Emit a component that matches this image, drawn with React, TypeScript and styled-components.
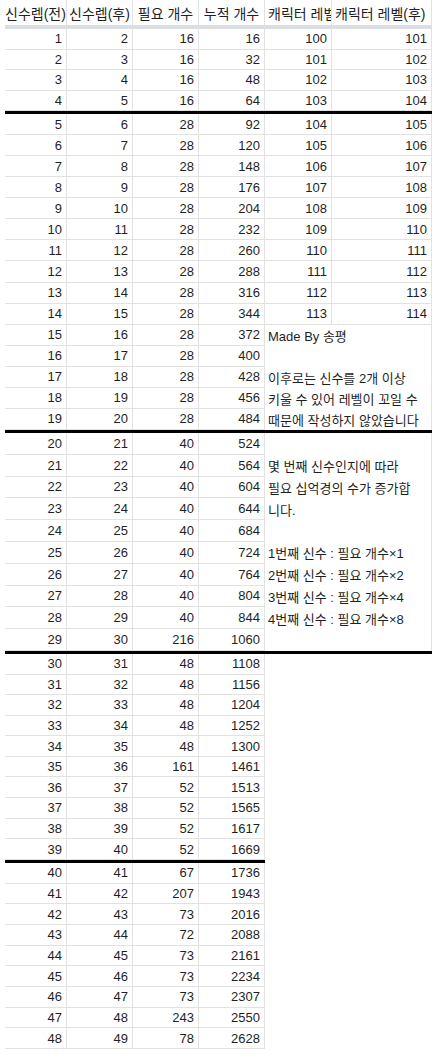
import * as React from 'react'
import styled, { createGlobalStyle } from 'styled-components'

const GlobalStyle = createGlobalStyle`
  html, body {
    margin: 0;
    padding: 0;
    background: #ffffff;
  }
  body {
    font-family: 'Liberation Sans', 'Noto Sans CJK KR', sans-serif;
    color: #1f1f1f;
  }
`

const COLS = '62px 66px 66px 66px 67px 100px'
const GRID = '#e2e2e2'

type Row = number[]
type Group = { height: number; rows: Row[]; notes?: string[]; shortLine?: boolean }

const groups: Group[] = [
  {
    height: 20.5,
    rows: [
      [1, 2, 16, 16, 100, 101],
      [2, 3, 16, 32, 101, 102],
      [3, 4, 16, 48, 102, 103],
      [4, 5, 16, 64, 103, 104],
    ],
  },
  {
    height: 21.07,
    rows: [
      [5, 6, 28, 92, 104, 105],
      [6, 7, 28, 120, 105, 106],
      [7, 8, 28, 148, 106, 107],
      [8, 9, 28, 176, 107, 108],
      [9, 10, 28, 204, 108, 109],
      [10, 11, 28, 232, 109, 110],
      [11, 12, 28, 260, 110, 111],
      [12, 13, 28, 288, 111, 112],
      [13, 14, 28, 316, 112, 113],
      [14, 15, 28, 344, 113, 114],
      [15, 16, 28, 372],
      [16, 17, 28, 400],
      [17, 18, 28, 428],
      [18, 19, 28, 456],
      [19, 20, 28, 484],
    ],
    notes: ['Made By 송평', '', '이후로는 신수를 2개 이상', '키울 수 있어 레벨이 꼬일 수', '때문에 작성하지 않았습니다'],
  },
  {
    height: 21.8,
    rows: [
      [20, 21, 40, 524],
      [21, 22, 40, 564],
      [22, 23, 40, 604],
      [23, 24, 40, 644],
      [24, 25, 40, 684],
      [25, 26, 40, 724],
      [26, 27, 40, 764],
      [27, 28, 40, 804],
      [28, 29, 40, 844],
      [29, 30, 216, 1060],
    ],
    notes: [
      '',
      '몇 번째 신수인지에 따라',
      '필요 십억경의 수가 증가합',
      '니다.',
      '',
      '1번째 신수 : 필요 개수×1',
      '2번째 신수 : 필요 개수×2',
      '3번째 신수 : 필요 개수×4',
      '4번째 신수 : 필요 개수×8',
      '',
    ],
  },
  {
    height: 20.6,
    rows: [
      [30, 31, 48, 1108],
      [31, 32, 48, 1156],
      [32, 33, 48, 1204],
      [33, 34, 48, 1252],
      [34, 35, 48, 1300],
      [35, 36, 161, 1461],
      [36, 37, 52, 1513],
      [37, 38, 52, 1565],
      [38, 39, 52, 1617],
      [39, 40, 52, 1669],
    ],
    shortLine: true,
  },
  {
    height: 20.7,
    rows: [
      [40, 41, 67, 1736],
      [41, 42, 207, 1943],
      [42, 43, 73, 2016],
      [43, 44, 72, 2088],
      [44, 45, 73, 2161],
      [45, 46, 73, 2234],
      [46, 47, 73, 2307],
      [47, 48, 243, 2550],
      [48, 49, 78, 2628],
    ],
  },
]

const Sheet = styled.div`
  width: 427px;
  margin-left: 5px;
  font-size: 13px;
`

const HeaderRow = styled.div`
  display: grid;
  grid-template-columns: ${COLS};
  height: 25px;
  border-bottom: 4px solid #dadde1;
`

const HeaderCell = styled.div<{ $clip?: boolean }>`
  display: flex;
  align-items: center;
  justify-content: ${(p) => (p.$clip ? 'flex-start' : 'center')};
  padding-left: ${(p) => (p.$clip ? '3px' : '0')};
  border-right: 1px solid ${GRID};
  font-size: 14px;
  white-space: nowrap;
  overflow: ${(p) => (p.$clip ? 'hidden' : 'visible')};
  min-width: 0;
`

const Body = styled.div<{ $h: number }>`
  display: grid;
  grid-template-columns: ${COLS};
  grid-auto-rows: ${(p) => p.$h}px;
`

const Cell = styled.div`
  display: flex;
  align-items: center;
  justify-content: flex-end;
  padding-right: 4px;
  border-right: 1px solid ${GRID};
  border-bottom: 1px solid ${GRID};
  white-space: nowrap;
`

const Note = styled.div`
  grid-column: span 2;
  display: flex;
  align-items: center;
  padding-left: 3px;
  border-right: 1px solid ${GRID};
  white-space: nowrap;
`

const Blank = styled.div`
  grid-column: span 2;
`

const Divider = styled.div<{ $short?: boolean }>`
  height: 3px;
  background: #000;
  width: ${(p) => (p.$short ? '260px' : '100%')};
`

const headers = ['신수렙(전)', '신수렙(후)', '필요 개수', '누적 개수']

export default function App() {
  return (
    <Sheet>
      <GlobalStyle />
      <HeaderRow>
        {headers.map((h) => (
          <HeaderCell key={h}>{h}</HeaderCell>
        ))}
        <HeaderCell $clip>캐릭터 레벨</HeaderCell>
        <HeaderCell $clip>캐릭터 레벨(후)</HeaderCell>
      </HeaderRow>
      {groups.map((g, gi) => (
        <React.Fragment key={gi}>
          {gi > 0 && <Divider $short={groups[gi - 1].shortLine} />}
          <Body $h={g.height}>
            {g.rows.map((r, ri) => (
              <React.Fragment key={ri}>
                {r.map((v, ci) => (
                  <Cell key={ci}>{v}</Cell>
                ))}
                {r.length === 4 && (g.notes ? <Note>{g.notes[ri - (g.rows.length - g.notes.length)]}</Note> : <Blank />)}
              </React.Fragment>
            ))}
          </Body>
        </React.Fragment>
      ))}
    </Sheet>
  )
}
